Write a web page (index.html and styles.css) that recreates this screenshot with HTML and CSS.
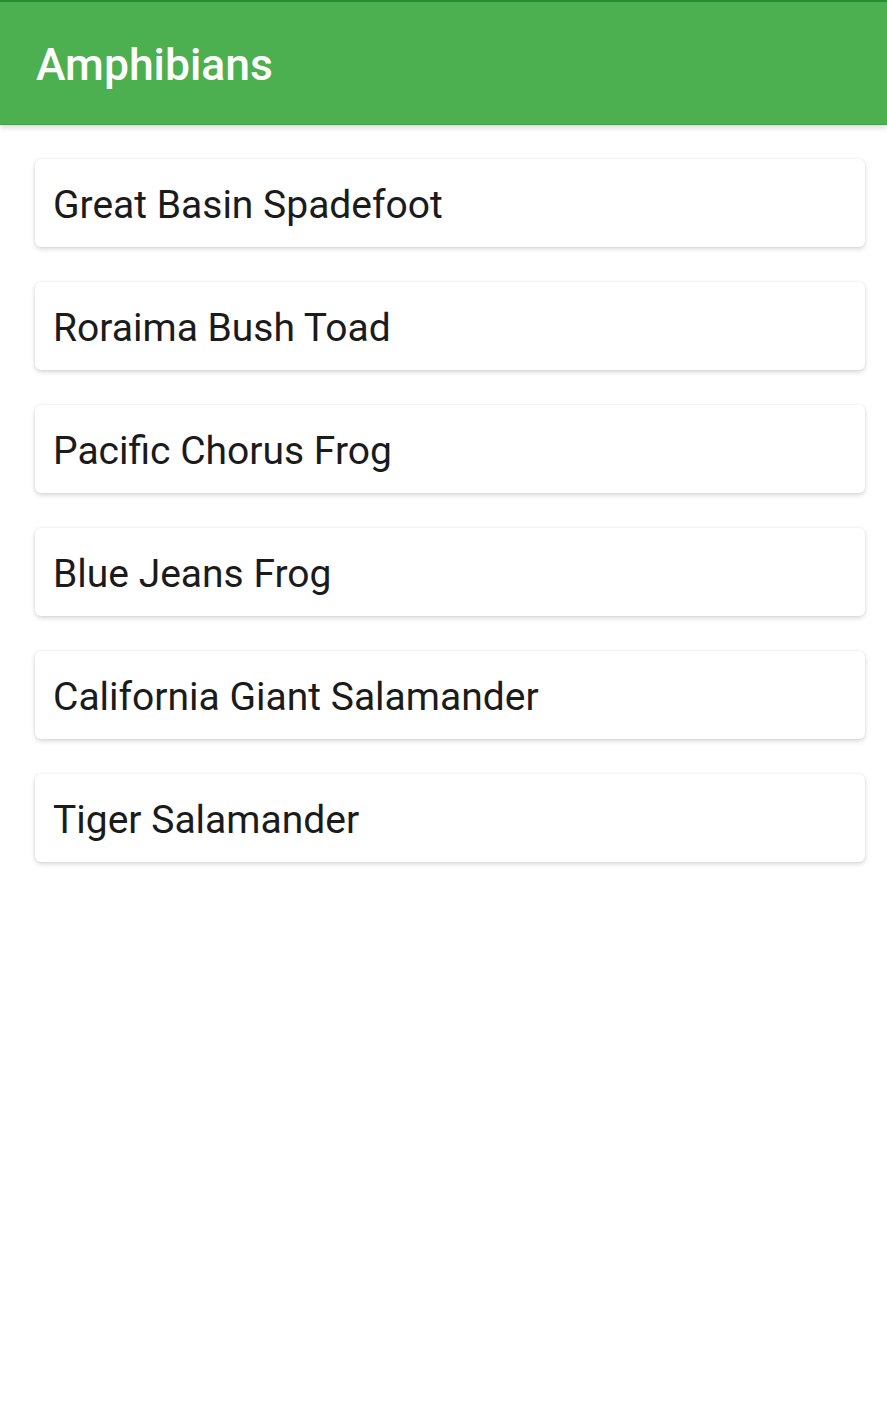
FILE: index.html
```html
<!DOCTYPE html>
<html>
<head>
<meta charset="utf-8">
<link rel="stylesheet" href="styles.css">
</head>
<body>
<header class="appbar">
  <h1 class="title">Amphibians</h1>
</header>
<main class="list">
  <div class="card">Great Basin Spadefoot</div>
  <div class="card">Roraima Bush Toad</div>
  <div class="card">Pacific Chorus Frog</div>
  <div class="card">Blue Jeans Frog</div>
  <div class="card">California Giant Salamander</div>
  <div class="card">Tiger Salamander</div>
</main>
</body>
</html>
```
FILE: styles.css
```css
html, body {
  margin: 0;
  padding: 0;
  background: #ffffff;
  font-family: Roboto, "Noto Sans", sans-serif;
}
.appbar {
  height: 125px;
  background: #4caf50;
  border-top: 2px solid #1f8f2f;
  border-bottom: 1px solid #43a047;
  box-shadow: 0 2px 6px rgba(0, 0, 0, 0.18);
  display: flex;
  align-items: center;
  padding-left: 36px;
  box-sizing: border-box;
  position: relative;
  z-index: 1;
}
.title {
  margin: 0;
  color: #ffffff;
  font-size: 44.5px;
  font-weight: 500;
  line-height: 1;
  padding-top: 4px;
}
.list {
  display: flex;
  flex-direction: column;
  gap: 35px;
  padding: 34px 22px 40px 35px;
}
.card {
  height: 88px;
  box-sizing: border-box;
  background: #ffffff;
  border-radius: 6px;
  box-shadow: 0 2px 5px rgba(0, 0, 0, 0.16), 0 0 2px rgba(0, 0, 0, 0.08);
  display: flex;
  align-items: center;
  padding-left: 18px;
  padding-top: 4px;
  font-size: 39px;
  color: #1b1b1b;
}
```
